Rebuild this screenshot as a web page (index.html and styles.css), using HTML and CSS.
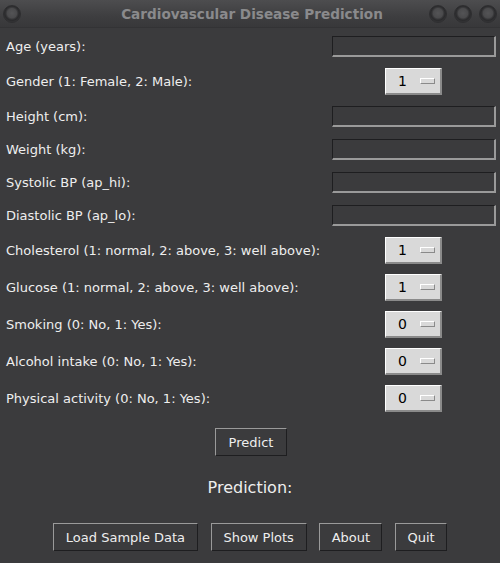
FILE: index.html
```html
<!DOCTYPE html>
<html>
<head>
<meta charset="utf-8">
<link rel="stylesheet" href="styles.css">
</head>
<body>
<div class="window">
  <div class="titlebar">
    <div class="tb-left"><span class="knob"></span></div>
    <span class="title">Cardiovascular Disease Prediction</span>
    <div class="knobs">
      <span class="knob"></span>
      <span class="knob"></span>
      <span class="knob"></span>
    </div>
  </div>
  <div class="form">
    <div class="row entry-row"><span class="label">Age (years):</span><div class="cell"><div class="entry"></div></div></div>
    <div class="row menu-row"><span class="label">Gender (1: Female, 2: Male):</span><div class="cell"><div class="menu"><span class="val">1</span><span class="ind"></span></div></div></div>
    <div class="row entry-row"><span class="label">Height (cm):</span><div class="cell"><div class="entry"></div></div></div>
    <div class="row entry-row"><span class="label">Weight (kg):</span><div class="cell"><div class="entry"></div></div></div>
    <div class="row entry-row"><span class="label">Systolic BP (ap_hi):</span><div class="cell"><div class="entry"></div></div></div>
    <div class="row entry-row"><span class="label">Diastolic BP (ap_lo):</span><div class="cell"><div class="entry"></div></div></div>
    <div class="row menu-row"><span class="label">Cholesterol (1: normal, 2: above, 3: well above):</span><div class="cell"><div class="menu"><span class="val">1</span><span class="ind"></span></div></div></div>
    <div class="row menu-row"><span class="label">Glucose (1: normal, 2: above, 3: well above):</span><div class="cell"><div class="menu"><span class="val">1</span><span class="ind"></span></div></div></div>
    <div class="row menu-row"><span class="label">Smoking (0: No, 1: Yes):</span><div class="cell"><div class="menu"><span class="val">0</span><span class="ind"></span></div></div></div>
    <div class="row menu-row"><span class="label">Alcohol intake (0: No, 1: Yes):</span><div class="cell"><div class="menu"><span class="val">0</span><span class="ind"></span></div></div></div>
    <div class="row menu-row"><span class="label">Physical activity (0: No, 1: Yes):</span><div class="cell"><div class="menu"><span class="val">0</span><span class="ind"></span></div></div></div>
  </div>
  <div class="predict-wrap"><button class="btn predict">Predict</button></div>
  <div class="result">Prediction:</div>
  <div class="actions">
    <button class="btn load">Load Sample Data</button>
    <button class="btn plots">Show Plots</button>
    <button class="btn about">About</button>
    <button class="btn quit">Quit</button>
  </div>
</div>
</body>
</html>
```
FILE: styles.css
```css
html, body {
  margin: 0;
  padding: 0;
  background: #3b3b3d;
}
.window {
  width: 500px;
  height: 563px;
  background: #3b3b3d;
  font-family: "DejaVu Sans", sans-serif;
  font-size: 13px;
  color: #eeeeee;
  overflow: hidden;
}
.titlebar {
  height: 28px;
  display: grid;
  grid-template-columns: 1fr auto 1fr;
  align-items: center;
  background: linear-gradient(#4d4d4f, #3e3e40 60%, #38383a);
  border-bottom: 1px solid #333335;
  box-sizing: border-box;
}
.tb-left {
  display: flex;
  padding-left: 3px;
}
.title {
  font-weight: bold;
  font-size: 13.6px;
  color: #8a8a8c;
  padding-left: 4px;
}
.knob {
  display: inline-block;
  width: 18px;
  height: 18px;
  border-radius: 50%;
  box-sizing: border-box;
  background: radial-gradient(circle at 50% 45%, #545456 0, #4a4a4c 40%, #3a3a3c 48%, #2a2a2c 60%, #3a3a3c 80%, #555557 100%);
  border: 1px solid #2e2e30;
}
.knobs {
  display: flex;
  justify-content: flex-end;
  gap: 7px;
  margin-right: 3px;
}
.form {
  padding-top: 2px;
}
.row {
  display: grid;
  grid-template-columns: 326px 164px;
  align-items: center;
  padding-left: 6px;
}
.entry-row {
  height: 33px;
}
.menu-row {
  height: 37px;
}
.cell {
  display: flex;
}
.entry {
  width: 164px;
  height: 21px;
  box-sizing: border-box;
  border-top: 1px solid #1e1e20;
  border-left: 1px solid #1e1e20;
  border-right: 2px solid #9a9a9a;
  border-bottom: 2px solid #9a9a9a;
  background: #3b3b3d;
}
.menu {
  width: 57px;
  height: 27px;
  margin-left: 53px;
  box-sizing: border-box;
  background: #d9d9d9;
  border-top: 1px solid #ffffff;
  border-left: 1px solid #ffffff;
  border-right: 2px solid #8a8a8a;
  border-bottom: 2px solid #8a8a8a;
  display: flex;
  align-items: center;
  color: #000;
  font-size: 14px;
}
.val {
  margin-left: 12px;
  width: 22px;
}
.ind {
  width: 15px;
  height: 6px;
  box-sizing: border-box;
  border-top: 1px solid #ffffff;
  border-left: 1px solid #ffffff;
  border-right: 1px solid #8a8a8a;
  border-bottom: 1px solid #8a8a8a;
  background: #d9d9d9;
}
.btn {
  font-family: "DejaVu Sans", sans-serif;
  font-size: 13px;
  color: #eeeeee;
  background: #3b3b3d;
  border-top: 1px solid #9a9a9a;
  border-left: 1px solid #9a9a9a;
  border-right: 1px solid #1e1e20;
  border-bottom: 1px solid #1e1e20;
  height: 28px;
  padding: 0;
  margin: 0;
}
.predict-wrap {
  display: flex;
  justify-content: center;
  padding-top: 11px;
  padding-left: 2px;
}
.predict {
  width: 72px;
}
.result {
  text-align: center;
  font-size: 16px;
  height: 40px;
  line-height: 40px;
  margin-top: 12px;
}
.actions {
  display: flex;
  justify-content: center;
  gap: 12.7px;
  margin-top: 15px;
}
.load { width: 145px; }
.plots { width: 96px; }
.about { width: 63px; }
.quit { width: 52px; }
```
